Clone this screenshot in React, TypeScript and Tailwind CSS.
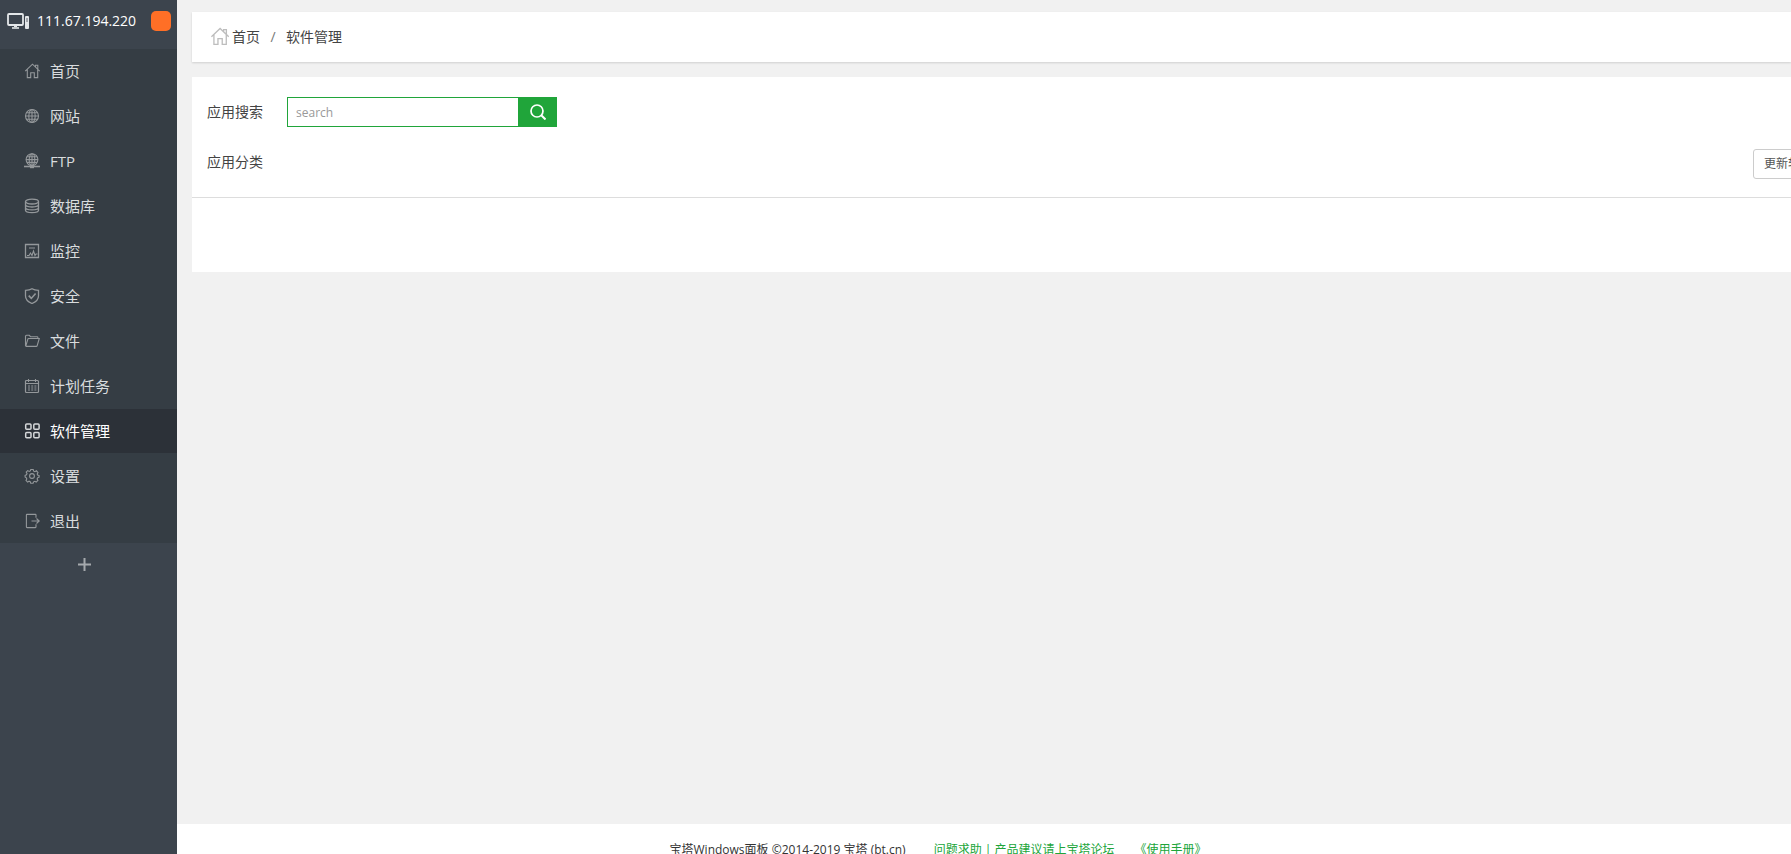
import React from "react";

type IconName =
  | "home"
  | "site"
  | "ftp"
  | "database"
  | "monitor"
  | "safe"
  | "folder"
  | "calendar"
  | "soft"
  | "setting"
  | "logout";

type MenuItem = {
  icon: IconName;
  label: string;
  active?: boolean;
};

const menu: MenuItem[] = [
  { icon: "home", label: "首页" },
  { icon: "site", label: "网站" },
  { icon: "ftp", label: "FTP" },
  { icon: "database", label: "数据库" },
  { icon: "monitor", label: "监控" },
  { icon: "safe", label: "安全" },
  { icon: "folder", label: "文件" },
  { icon: "calendar", label: "计划任务" },
  { icon: "soft", label: "软件管理", active: true },
  { icon: "setting", label: "设置" },
  { icon: "logout", label: "退出" },
];

const shapes: Record<IconName, React.ReactNode> = {
  home: <path d="M1.2 8.200 8.500 1.200l7.300 7M11.500 4V2.200h2.300v3.900M3.300 6.600v8h3.400V9.800h3.600v4.800h3.400v-8" />,
  site: (
    <>
      <circle cx="8" cy="8" r="6.500" />
      <ellipse cx="8" cy="8" rx="3.200" ry="6.500" />
      <path d="M1.500 8h13M8 1.500v13M2.500 4.800h11M2.500 11.200h11" />
    </>
  ),
  ftp: (
    <>
      <circle cx="8" cy="6.600" r="5.900" />
      <ellipse cx="8" cy="6.600" rx="2.800" ry="5.900" />
      <path d="M2 6.600h12M8 1v11M3 3.800h10M3 9.400h10" />
      <path d="M0 13.500h16" strokeWidth="1.600" />
      <path d="M6 13.800h4" strokeWidth="2.800" />
    </>
  ),
  database: (
    <g strokeWidth="1.300">
      <ellipse cx="8" cy="3.600" rx="6.500" ry="2.400" />
      <path d="M1.500 3.600v8.600c0 1.400 2.900 2.400 6.500 2.400s6.500-1 6.500-2.400V3.600M1.500 6.600C1.500 8 4.400 9 8 9s6.500-1 6.500-2.400M1.500 9.400c0 1.400 2.900 2.400 6.500 2.400s6.500-1 6.500-2.400" />
    </g>
  ),
  monitor: (
    <>
      <path d="M1.500 1.500h13v13h-13z" strokeWidth="1.300" />
      <path d="M5 4.500h6M5 5.500h6" opacity=".5" />
      <path d="M3 12.500h2l1.500-2.500L8 12.500 9.500 8l1.500 4.500 1-1.500h1.500" />
    </>
  ),
  safe: (
    <g strokeWidth="1.300">
      <path d="M8 .8c2 1.300 4 1.600 6.500 1.600V8c0 3.600-2.800 6-6.500 7.500C4.300 14 1.500 11.600 1.500 8V2.400C4 2.400 6 2.100 8 .8z" />
      <path d="m4.700 7.600 2.600 2.800 4.300-5" strokeWidth="1.600" />
    </g>
  ),
  folder: (
    <path d="M1.500 13.200V3.300c0-.7.300-1 1-1h2.800l1.200 1.400H13c.6 0 .9.300.9.900v1M1.700 13.400 3.900 6c.1-.3.300-.5.700-.5h10.700l-2.200 7.300c-.1.400-.4.600-.8.600H1.700" />
  ),
  calendar: (
    <>
      <rect x="1.500" y="2.500" width="13" height="12" rx="1" strokeWidth="1.200" />
      <path d="M1.500 5.500h13M4.500 1v3M11.500 1v3" />
      <path d="M4 8h9M4 10h9M4 12h9" strokeDasharray="2 1.200" />
    </>
  ),
  soft: (
    <g strokeWidth="1.500">
      <rect x="1.700" y="1" width="5.300" height="5.300" rx="1" />
      <rect x="9.800" y="1" width="5.300" height="5.300" rx="1" />
      <rect x="1.700" y="9.500" width="5.300" height="5.300" rx="1" />
      <rect x="9.800" y="9.500" width="5.300" height="5.300" rx="1" />
    </g>
  ),
  setting: (
    <g transform="translate(.5 0)">
      <circle cx="7.500" cy="8" r="2.400" />
      <path d="M6.300 1.500h2.400l.5 1.700 1.200.5 1.500-.9 1.600 1.700-.8 1.500.4 1.100 1.500.5v1.500l-1.500.7-.5 1.200.8 1.500-1.700 1.600-1.400-.8-1.200.5-.5 1.400H6.200l-.5-1.500-1.200-.5-1.400.9-1.600-1.700.8-1.500-.5-1.100L.6 9V7.300l1.400-.5.500-1.200-.8-1.500 1.500-1.500 1.500.8 1.100-.5z" />
    </g>
  ),
  logout: (
    <path d="M12 4.800V2c0-.4-.2-.6-.6-.6H3c-.4 0-.6.200-.6.600v12c0 .4.200.6.600.6h8.400c.4 0 .6-.2.600-.6v-2.800M7.500 8H15M12.500 5.500 15.200 8l-2.700 2.500" />
  ),
};

function Icon({ name, className }: { name: IconName; className: string }) {
  return (
    <svg viewBox="0 0 16 16" fill="none" stroke="currentColor" strokeWidth="1.100" className={className} aria-hidden="true">
      {shapes[name]}
    </svg>
  );
}

function Sidebar() {
  return (
    <aside className="w-[177px] shrink-0 bg-[#3c444d]">
      <div className="flex h-[49px] items-start pl-[7px] pt-[11px]">
        <svg viewBox="0 0 23 17" fill="none" className="mt-[2px] h-[17px] w-[23px] text-[#e4e7e9]" aria-hidden="true">
          <rect x="1" y="1" width="15" height="11" rx="1" stroke="currentColor" strokeWidth="1.800" />
          <path d="M5 15h7" stroke="currentColor" strokeWidth="1.600" />
          <path d="M7 13.500h3" stroke="currentColor" />
          <rect x="18" y="3" width="4" height="13" rx="1" fill="currentColor" />
          <path d="M19 6h2M19 8h2" stroke="#3c444d" strokeWidth=".8" />
        </svg>
        <span className="ml-[7px] w-[114px] text-sm leading-5 text-white">111.67.194.220</span>
        <button className="size-5 rounded-[5px] bg-[#ff6f26]" aria-label="消息" />
      </div>
      <nav>
        <ul className="flex flex-col gap-px bg-[#353d44]">
          {menu.map((item) => (
            <li key={item.label}>
              <a
                href="#"
                className={`flex h-11 items-center gap-[10px] pl-6 text-[15px] ${
                  item.active ? "bg-[#2c3138] text-white" : "text-[#d9dcde]"
                }`}
              >
                <Icon name={item.icon} className={`size-4 ${item.active ? "text-[#d5d7d9]" : "text-[#94989b]"}`} />
                {item.label}
              </a>
            </li>
          ))}
        </ul>
      </nav>
      <button className="flex h-[42px] w-[169px] items-center justify-center text-[#a5a9ad]" aria-label="添加">
        <svg viewBox="0 0 13 13" className="size-[13px]" stroke="currentColor" strokeWidth="2">
          <path d="M0 6.500h13M6.500 0v13" />
        </svg>
      </button>
    </aside>
  );
}

export default function App() {
  return (
    <div className="flex h-screen overflow-hidden bg-[#f1f1f1] font-['Open_Sans','Noto_Sans_CJK_SC',sans-serif] text-[#444]">
      <Sidebar />
      <main className="flex min-w-0 flex-1 flex-col">
        {/* Breadcrumb */}
        <div className="ml-[15px] mt-3 flex h-[50px] items-center bg-white pb-px pl-[18px] text-sm shadow-[0_1px_2px_rgba(0,0,0,0.14)]">
          <Icon name="home" className="size-[19px] text-[#bdbdbd]" />
          <a href="#" className="ml-[3px]">首页</a>
          <span className="w-[26px] text-center text-[#777]">/</span>
          <span>软件管理</span>
        </div>

        {/* Software panel */}
        <div className="ml-[15px] mt-[15px] bg-white">
          <div className="border-b border-[#ddd] pb-[18px] pl-[15px] pt-5">
            <form className="flex h-[30px] items-center text-sm">
              <label htmlFor="search" className="w-20">应用搜索</label>
              <input
                id="search"
                type="text"
                placeholder="search"
                className="h-[30px] w-[231px] border border-r-0 border-[#20a53a] px-2 text-xs outline-none placeholder:text-[#999]"
              />
              <button type="submit" className="flex h-[30px] w-[39px] items-center justify-center bg-[#20a53a] text-white" aria-label="搜索">
                <svg viewBox="0 0 16 16" fill="none" stroke="currentColor" strokeWidth="1.700" className="size-4">
                  <circle cx="7" cy="7" r="6" />
                  <path d="m11.300 11.300 4.200 4.200" strokeWidth="2" />
                </svg>
              </button>
            </form>
            <div className="mt-[22px] flex justify-between">
              <span className="h-[26px] text-sm leading-[26px]">应用分类</span>
              <button className="-mr-14 h-[30px] shrink-0 rounded-[3px] border border-[#ccc] bg-white px-[10px] text-xs text-[#555]">
                更新软件列表
              </button>
            </div>
          </div>
          <div className="h-[74px]" />
        </div>

        <footer className="mt-auto flex h-[30px] shrink-0 items-start justify-center overflow-hidden bg-white pr-[92px] pt-4 text-xs leading-5">
          <span className="text-[#333]">宝塔Windows面板 ©2014-2019 宝塔 (bt.cn)</span>
          <a href="#" className="ml-7 text-[#20a53a]">问题求助 | 产品建议请上宝塔论坛</a>
          <a href="#" className="ml-5 text-[#20a53a]">《使用手册》</a>
        </footer>
      </main>
    </div>
  );
}
